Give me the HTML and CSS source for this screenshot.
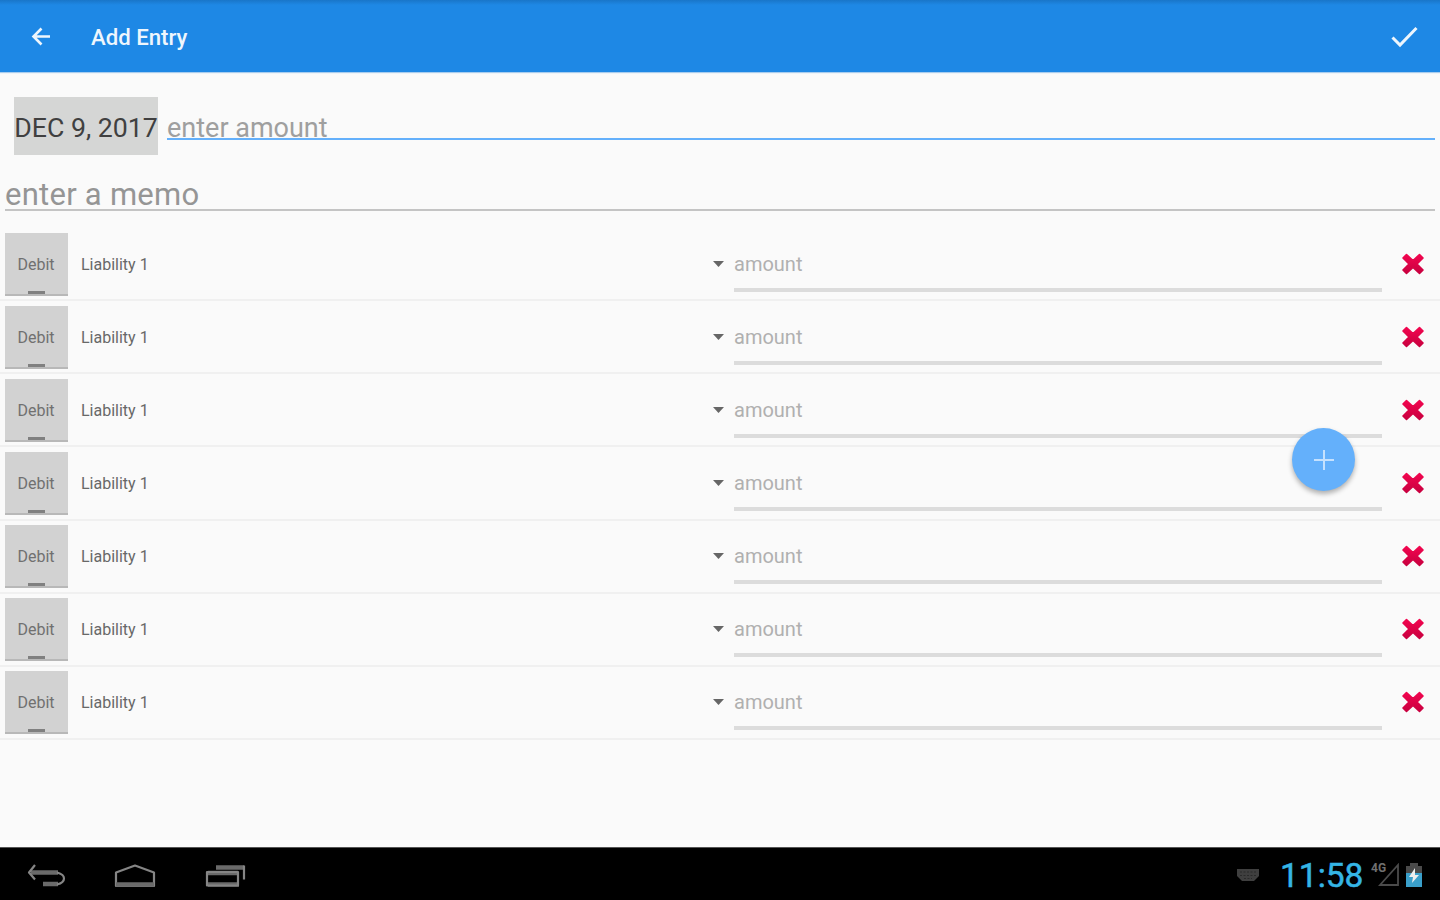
FILE: index.html
```html
<!DOCTYPE html>
<html lang="en">
<head>
<meta charset="utf-8">
<title>Add Entry</title>
<link rel="stylesheet" href="styles.css">
</head>
<body>
<div class="screen">
  <header class="appbar">
    <svg class="back" width="20" height="20" viewBox="0 0 20 20"><path d="M19 9.500H3M10.500 1.500L2.500 9.500l8 8"/></svg>
    <h1 class="title"><span>Add Entry</span></h1>
    <svg class="check" width="28" height="24" viewBox="0 0 28 24"><path d="M2.500 12.500l7.500 7.500L26.500 3"/></svg>
  </header>
  <main class="content">
    <div class="top">
      <div class="date"><span>DEC 9, 2017</span></div>
      <div class="total"><span>enter amount</span></div>
    </div>
    <div class="memo"><span>enter a memo</span></div>
    <div class="rows" id="rows"></div>
    <div class="fab"><svg width="20" height="20" viewBox="0 0 20 20"><path d="M10 0v20M0 10h20"/></svg></div>
  </main>
  <footer class="navbar">
    <svg class="nav-back" width="40" height="24" viewBox="0 0 40 24"><path class="thick" d="M5 8.500h27M17 20h15"/><path d="M9 1L3 8.500l6 7M31 8.500c4 1 7 3 7 6s-3 5-7 6"/></svg>
    <svg class="nav-home" width="42" height="24" viewBox="0 0 42 24"><path d="M2 22V8.500L21 1.500l19 7V22z"/><path class="thick" d="M2 20.500h38"/></svg>
    <svg class="nav-recent" width="42" height="24" viewBox="0 0 42 24"><path class="thick" d="M11 3.500h28M3 9h30M3 20.500h31"/><path d="M39 1.500v14M2 8h31v13.500H2z"/></svg>
    <div class="status">
      <svg class="keyboard" width="24" height="14" viewBox="0 0 24 14"><path d="M1 1h22v7l-5 5H6L1 8z" fill="#3f3f3f"/><path d="M4 4h16M4 7.500h16M8 10.500h8" stroke="#2a2a2a" stroke-width="1.200" stroke-dasharray="2 1.500"/></svg>
      <span class="clock">11:58</span>
      <div class="signal"><span class="net">4G</span><svg width="22" height="24" viewBox="0 0 22 24"><path d="M20 2v20H2z" fill="none" stroke="#4b4b4b" stroke-width="1.800"/></svg></div>
      <svg class="battery" width="16" height="25" viewBox="0 0 16 25"><path d="M4 0h8v3h4v8H0V3h4z" fill="#4a4a4a"/><path d="M0 10h16v14H0z" fill="#3a9fca"/><path d="M9 5L3 14h4l-1 6 7-8H9z" fill="#eee"/></svg>
    </div>
  </footer>
</div>
<template id="row">
  <div class="row">
    <div class="toggle"><span>Debit</span></div>
    <div class="account"><span>Liability 1</span><svg width="11" height="7" viewBox="0 0 11 7"><path d="M0 0h11L5.500 6z" fill="#666"/></svg></div>
    <div class="amount"><span>amount</span></div>
    <svg class="remove" width="22" height="22" viewBox="0 0 22 22"><defs><linearGradient id="red" x1="0" y1="0" x2="0" y2="1"><stop offset="0" stop-color="#f2054f"/><stop offset="1" stop-color="#c8003f"/></linearGradient></defs><path d="M4.500 1.500L11 7.500 17.500 1.500l3.500 3.500L15 11l6 6-3.500 3.500L11 14.500l-6.500 6L1 17l6-6L1 5z" fill="url(#red)" stroke="url(#red)" stroke-width="1.600" stroke-linejoin="round"/></svg>
  </div>
</template>
<script src="rows.js"></script>
</body>
</html>
```

FILE: styles.css
```css
* { box-sizing: border-box; }
body { margin: 0; font-family: Roboto, "Noto Sans", sans-serif; }
.screen { width: 1440px; height: 900px; display: flex; flex-direction: column; overflow: hidden; background: #fafafa; }
span { white-space: nowrap; }

.appbar { height: 72px; flex: none; display: flex; align-items: center; padding: 2px 22px 0 31px; background: linear-gradient(#1976c9, #1e88e5 5px); color: #fff; box-shadow: 0 1px 1px #a9cdee; position: relative; }
.appbar path { fill: none; stroke: #eef6fd; stroke-width: 2.600; }
.appbar .check path { stroke-width: 3; }
.title { margin: 0 auto 0 40px; font-size: 22.200px; line-height: 30px; font-weight: 500; color: #eef6fd; }

.content { flex: 1; position: relative; }
.top { display: flex; align-items: flex-start; gap: 9px; padding: 25px 5px 0 14px; }
.date { width: 144px; height: 58px; display: flex; align-items: center; justify-content: center; background: #d5d6d5; color: #404040; font-size: 26.700px; padding-top: 4px; }
.total { flex: 1; height: 43px; border-bottom: 2px solid #64b0fb; color: #9f9f9f; font-size: 27px; line-height: 32px; padding-top: 15px; }
.memo { margin: 21px 5px 0; height: 35px; border-bottom: 2px solid #c4c4c4; color: #959595; font-size: 31px; line-height: 38px; letter-spacing: .250px; }

.rows { padding-top: 16px; }
.row { height: 73.170px; display: flex; align-items: flex-start; padding: 5.500px 16px 0 5px; box-shadow: inset 0 -1px #f0f0f0, 0 1px #f0f0f0; }
.toggle { width: 63px; height: 63px; display: flex; align-items: center; justify-content: center; position: relative; background: #d2d2d2; border-bottom: 2px solid #b8b8b8; color: #707070; font-size: 16px; padding-top: 2px; }
.toggle::after { content: ""; position: absolute; left: 23px; bottom: 0; width: 17px; height: 3px; background: #808080; }
.toggle span { margin-left: -1px; }
.account { width: 666px; height: 63px; display: flex; align-items: center; justify-content: space-between; padding: 0 10px 0 13px; color: #686868; font-size: 16px; }
.amount { width: 648px; height: 59px; border-bottom: 4px solid #dcdcdc; color: #b0b0b0; font-size: 20px; line-height: 62px; }
.remove { margin: 20px 0 0 auto; }

.fab { position: absolute; left: 1292px; top: 356px; width: 63px; height: 63px; border-radius: 50%; background: #64b0fb; display: flex; align-items: center; justify-content: center; box-shadow: 0 3px 5px rgba(0,0,0,.3); }
.fab path { stroke: #c5e1fe; stroke-width: 2; }

.navbar { height: 53px; flex: none; display: flex; align-items: flex-start; background: #000; border-top: 1px solid #555; padding: 16px 18px 0 26px; }
.navbar > svg path { fill: none; stroke: #858585; stroke-width: 2.200; stroke-linejoin: round; }
.navbar > svg .thick { stroke: #6a6a6a; stroke-width: 4.500; }
.nav-home { margin-left: 48px; }
.nav-recent { margin-left: 49px; }
.status { margin-left: auto; display: flex; align-items: flex-start; }
.keyboard { margin: 4px 20px 0 0; }
.clock { color: #35b5e5; font-size: 33.500px; line-height: 36px; margin-top: -6px; width: 84px; -webkit-text-stroke: .5px #35b5e5; }
.signal { position: relative; width: 29px; margin: -1px 6px 0 7px; display: flex; justify-content: flex-end; }
.net { position: absolute; left: 0; top: -2px; color: #707070; font-size: 12px; line-height: 14px; font-weight: 700; }
.battery { margin-top: -1px; }
```

FILE: rows.js
```js
const list = document.getElementById("rows");
const row = document.getElementById("row");
for (let i = 0; i < 7; i++) list.appendChild(row.content.cloneNode(true));
```
